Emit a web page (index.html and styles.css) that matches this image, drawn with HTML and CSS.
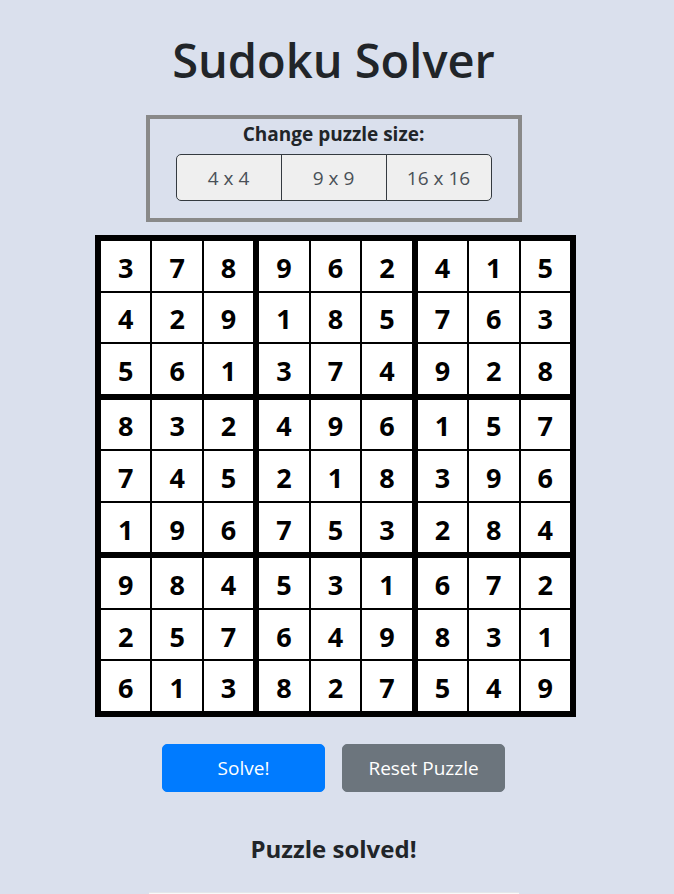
FILE: index.html
```html
<!DOCTYPE html>
<html lang="en">
<head>
<meta charset="utf-8">
<title>Sudoku Solver</title>
<link rel="stylesheet" href="styles.css">
</head>
<body>
<div class="app">
  <h1 class="title">Sudoku Solver</h1>
  <div class="size-box">
    <div class="size-label">Change puzzle size:</div>
    <div class="size-group">
      <button class="size-btn">4 x 4</button>
      <button class="size-btn">9 x 9</button>
      <button class="size-btn">16 x 16</button>
    </div>
  </div>
  <div class="board">
    <div class="block"><div class="cell">3</div><div class="cell">7</div><div class="cell">8</div><div class="cell">4</div><div class="cell">2</div><div class="cell">9</div><div class="cell">5</div><div class="cell">6</div><div class="cell">1</div></div>
    <div class="block"><div class="cell">9</div><div class="cell">6</div><div class="cell">2</div><div class="cell">1</div><div class="cell">8</div><div class="cell">5</div><div class="cell">3</div><div class="cell">7</div><div class="cell">4</div></div>
    <div class="block"><div class="cell">4</div><div class="cell">1</div><div class="cell">5</div><div class="cell">7</div><div class="cell">6</div><div class="cell">3</div><div class="cell">9</div><div class="cell">2</div><div class="cell">8</div></div>
    <div class="block"><div class="cell">8</div><div class="cell">3</div><div class="cell">2</div><div class="cell">7</div><div class="cell">4</div><div class="cell">5</div><div class="cell">1</div><div class="cell">9</div><div class="cell">6</div></div>
    <div class="block"><div class="cell">4</div><div class="cell">9</div><div class="cell">6</div><div class="cell">2</div><div class="cell">1</div><div class="cell">8</div><div class="cell">7</div><div class="cell">5</div><div class="cell">3</div></div>
    <div class="block"><div class="cell">1</div><div class="cell">5</div><div class="cell">7</div><div class="cell">3</div><div class="cell">9</div><div class="cell">6</div><div class="cell">2</div><div class="cell">8</div><div class="cell">4</div></div>
    <div class="block"><div class="cell">9</div><div class="cell">8</div><div class="cell">4</div><div class="cell">2</div><div class="cell">5</div><div class="cell">7</div><div class="cell">6</div><div class="cell">1</div><div class="cell">3</div></div>
    <div class="block"><div class="cell">5</div><div class="cell">3</div><div class="cell">1</div><div class="cell">6</div><div class="cell">4</div><div class="cell">9</div><div class="cell">8</div><div class="cell">2</div><div class="cell">7</div></div>
    <div class="block"><div class="cell">6</div><div class="cell">7</div><div class="cell">2</div><div class="cell">8</div><div class="cell">3</div><div class="cell">1</div><div class="cell">5</div><div class="cell">4</div><div class="cell">9</div></div>
  </div>
  <div class="actions">
    <button class="btn btn-primary">Solve!</button>
    <button class="btn btn-secondary">Reset Puzzle</button>
  </div>
  <h4 class="status">Puzzle solved!</h4>
  <div class="panel"></div>
</div>
</body>
</html>
```
FILE: styles.css
```css
html, body {
  margin: 0;
  padding: 0;
  background: #dae0ed;
}
body {
  font-family: "Open Sans", "Noto Sans", sans-serif;
  color: #212529;
  overflow: hidden;
}
.app {
  display: flex;
  flex-direction: column;
  align-items: center;
  padding-right: 7px;
}
.title {
  margin: 31px 0 0;
  font-size: 47px;
  line-height: 58px;
  font-weight: 600;
  color: #212529;
}
.size-box {
  margin-top: 26px;
  width: 368px;
  height: 98px;
  border: 4px solid #898989;
  padding-top: 1px;
  box-sizing: content-box;
  display: flex;
  flex-direction: column;
  align-items: center;
}
.size-label {
  font-size: 19px;
  line-height: 28px;
  font-weight: 700;
  color: #212529;
}
.size-group {
  margin-top: 6px;
  display: flex;
}
.size-btn {
  width: 106px;
  height: 47px;
  margin: 0;
  margin-left: -1px;
  border: 1px solid #343a40;
  background: #efefef;
  color: #495057;
  font-family: "Open Sans", "Noto Sans", sans-serif;
  font-size: 19px;
  font-weight: 400;
  padding: 0;
}
.size-btn:first-child {
  margin-left: 0;
  border-radius: 5px 0 0 5px;
}
.size-btn:last-child {
  border-radius: 0 5px 5px 0;
}
.board {
  margin-top: 13px;
  margin-left: 4px;
  width: 469px;
  height: 470px;
  border: 6px solid #000;
  background: #000;
  display: grid;
  grid-template-columns: repeat(3, 1fr);
  grid-template-rows: repeat(3, 1fr);
  gap: 6px;
}
.block {
  display: grid;
  grid-template-columns: repeat(3, 1fr);
  grid-template-rows: repeat(3, 1fr);
  gap: 2px;
}
.cell {
  background: #fff;
  display: flex;
  align-items: center;
  justify-content: center;
  font-size: 27px;
  font-weight: 700;
  color: #000;
  padding-top: 3px;
}
.actions {
  margin-top: 27px;
  display: flex;
  gap: 17px;
}
.btn {
  width: 163px;
  height: 48px;
  border: 1px solid transparent;
  border-radius: 5px;
  color: #fff;
  font-family: "Open Sans", "Noto Sans", sans-serif;
  font-size: 19px;
  font-weight: 400;
  padding: 0;
}
.btn-primary {
  background: #007bff;
  border-color: #007bff;
}
.btn-secondary {
  background: #6c757d;
  border-color: #6c757d;
}
.status {
  margin: 42px 0 0;
  font-size: 24px;
  line-height: 29px;
  font-weight: 700;
  color: #212529;
}
.panel {
  margin-top: 29px;
  width: 370px;
  height: 60px;
  background: #f8f9fa;
  border-top: 1px solid #e4e6ea;
}
```
